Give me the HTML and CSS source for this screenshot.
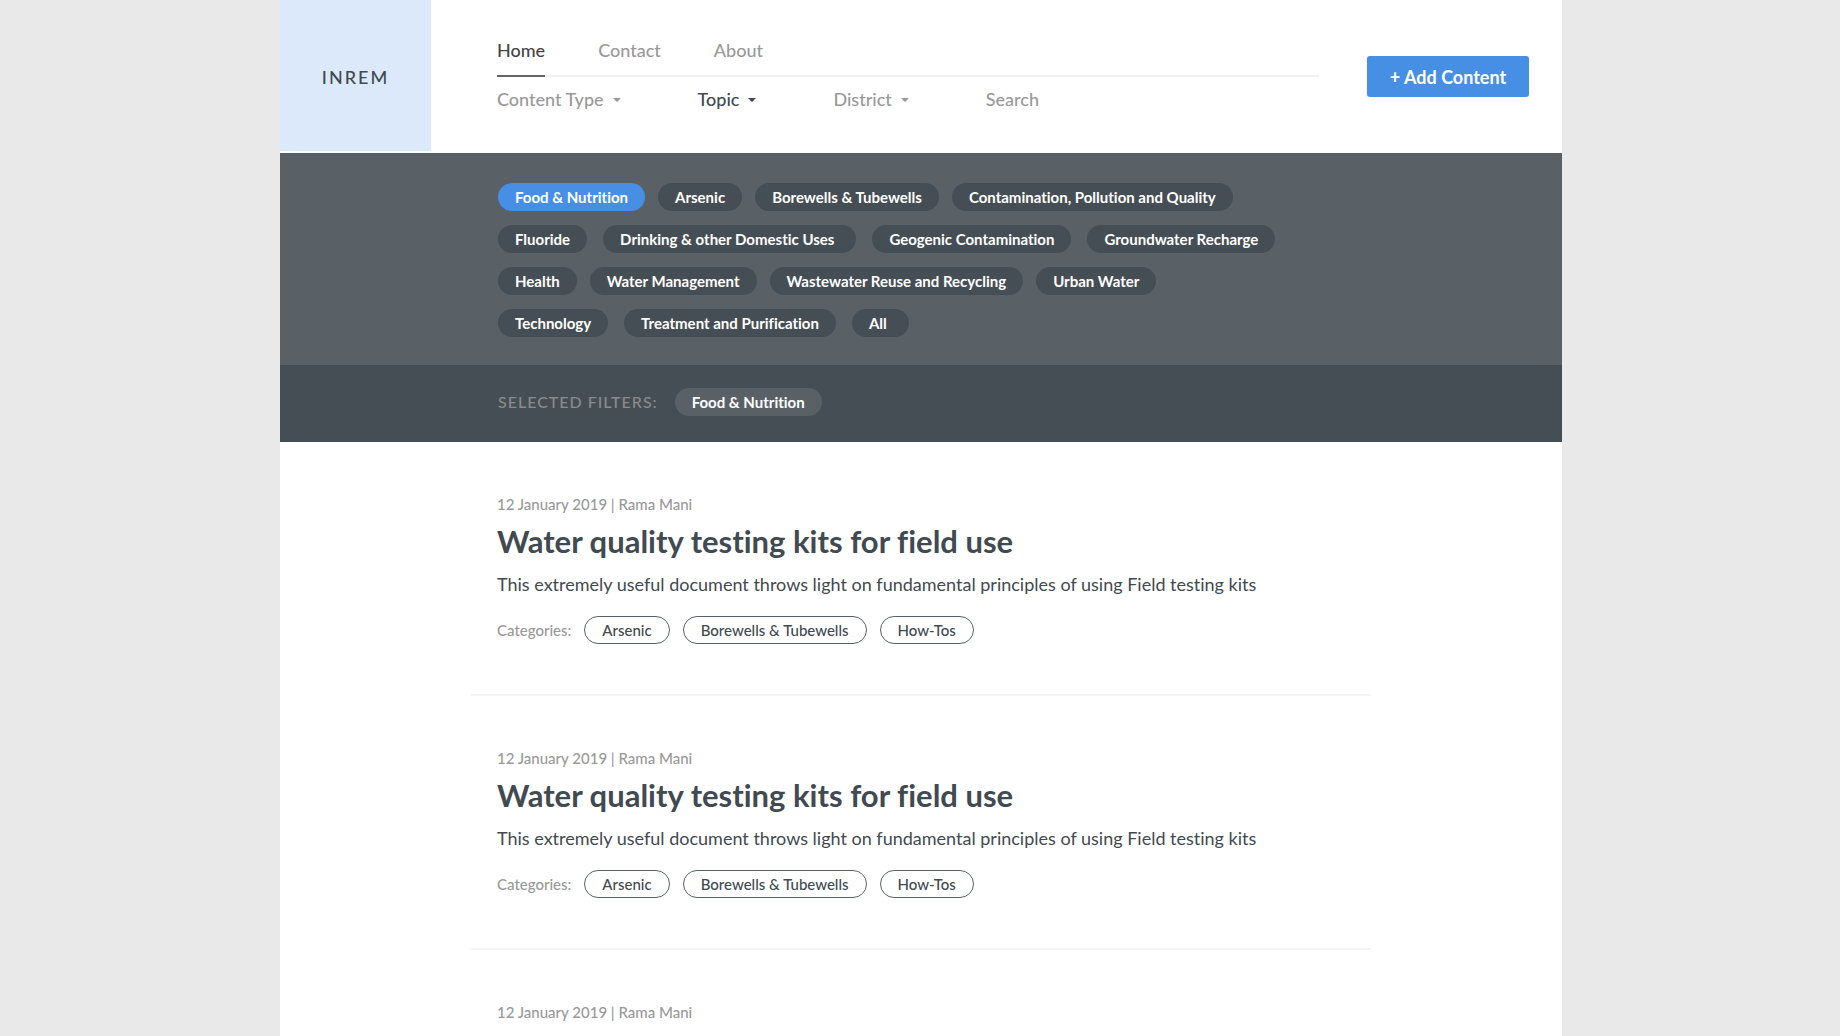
FILE: index.html
```html
<!DOCTYPE html>
<html lang="en">
<head>
  <meta charset="utf-8">
  <meta name="viewport" content="width=device-width, initial-scale=1">
  <title>INREM</title>
  <link rel="stylesheet" href="styles.css">
</head>
<body>
  <div class="page">
    <header class="header">
      <a class="logo" href="#">INREM</a>
      <div class="menus">
        <nav class="nav" aria-label="Main">
          <a class="nav-link is-active" href="#" aria-current="page">Home</a>
          <a class="nav-link" href="#">Contact</a>
          <a class="nav-link" href="#">About</a>
        </nav>
        <div class="filters">
          <button class="filter" type="button" aria-haspopup="true">Content Type <svg class="caret" viewBox="0 0 8 4" aria-hidden="true"><path d="M0 0h8L4.600 3.600q-.6.5-1.200 0z"/></svg></button>
          <button class="filter is-open" type="button" aria-haspopup="true" aria-expanded="true">Topic <svg class="caret" viewBox="0 0 8 4" aria-hidden="true"><path d="M0 0h8L4.600 3.600q-.6.5-1.200 0z"/></svg></button>
          <button class="filter" type="button" aria-haspopup="true">District <svg class="caret" viewBox="0 0 8 4" aria-hidden="true"><path d="M0 0h8L4.600 3.600q-.6.5-1.200 0z"/></svg></button>
          <button class="filter" type="button">Search</button>
        </div>
      </div>
      <button class="add" type="button">+ Add Content</button>
    </header>

    <section class="topics" aria-label="Topics">
      <div class="topic-row">
        <button class="chip is-selected" type="button">Food &amp; Nutrition</button>
        <button class="chip" type="button">Arsenic</button>
        <button class="chip" type="button">Borewells &amp; Tubewells</button>
        <button class="chip" type="button">Contamination, Pollution and Quality</button>
      </div>
      <div class="topic-row topic-row-wide">
        <button class="chip" type="button">Fluoride</button>
        <button class="chip chip-roomy" type="button">Drinking &amp; other Domestic Uses</button>
        <button class="chip" type="button">Geogenic Contamination</button>
        <button class="chip" type="button">Groundwater Recharge</button>
      </div>
      <div class="topic-row">
        <button class="chip" type="button">Health</button>
        <button class="chip" type="button">Water Management</button>
        <button class="chip" type="button">Wastewater Reuse and Recycling</button>
        <button class="chip" type="button">Urban Water</button>
      </div>
      <div class="topic-row topic-row-wide">
        <button class="chip" type="button">Technology</button>
        <button class="chip" type="button">Treatment and Purification</button>
        <button class="chip chip-roomy" type="button">All</button>
      </div>
    </section>

    <section class="selected">
      <h2 class="selected-label">SELECTED FILTERS:</h2>
      <button class="chip chip-light" type="button">Food &amp; Nutrition</button>
    </section>

    <main class="articles">
      <article class="article">
        <p class="meta">12 January 2019 | Rama Mani</p>
        <h2 class="title">Water quality testing kits for field use</h2>
        <p class="summary">This extremely useful document throws light on fundamental principles of using Field testing kits</p>
        <div class="categories">
          <span class="categories-label">Categories:</span>
          <a class="tag" href="#">Arsenic</a>
          <a class="tag" href="#">Borewells &amp; Tubewells</a>
          <a class="tag" href="#">How-Tos</a>
        </div>
      </article>
      <article class="article">
        <p class="meta">12 January 2019 | Rama Mani</p>
        <h2 class="title">Water quality testing kits for field use</h2>
        <p class="summary">This extremely useful document throws light on fundamental principles of using Field testing kits</p>
        <div class="categories">
          <span class="categories-label">Categories:</span>
          <a class="tag" href="#">Arsenic</a>
          <a class="tag" href="#">Borewells &amp; Tubewells</a>
          <a class="tag" href="#">How-Tos</a>
        </div>
      </article>
      <article class="article article-last">
        <p class="meta">12 January 2019 | Rama Mani</p>
      </article>
    </main>
  </div>
</body>
</html>
```

FILE: styles.css
```css
:root {
  --ink: #414a50;
  --muted: #999;
  --line: #f1f1f1;
  --blue: #468fe4;
  --panel: #596167;
  --panel-dark: #464e55;
  --gutter: 218px;
}

* {
  box-sizing: border-box;
}

body {
  margin: 0;
  padding-left: 2px;
  background: #e9e9e9;
  color: var(--ink);
  font-family: Lato, "Liberation Sans", sans-serif;
  font-size: 18px;
  font-weight: 500;
  font-variant-ligatures: no-common-ligatures;
}

button {
  margin: 0;
  padding: 0;
  border: 0;
  background: none;
  color: inherit;
  font: inherit;
  font-variant-ligatures: inherit;
  white-space: nowrap;
  cursor: pointer;
}

a {
  color: inherit;
  text-decoration: none;
}

h2,
p {
  margin: 0;
}

.page {
  max-width: 1282px;
  min-height: 100vh;
  margin: 0 auto;
  background: #fff;
}

/* Header */
.header {
  display: flex;
  align-items: flex-start;
  padding-bottom: 2px;
}

.logo {
  display: flex;
  flex: none;
  align-items: center;
  justify-content: center;
  width: 151px;
  height: 151px;
  padding-top: 2px;
  background: #dbe9fa;
  letter-spacing: 2px;
}

.menus {
  flex: 1;
  margin: 38px 48px 0 66px;
}

.nav {
  display: flex;
  gap: 53px;
  border-bottom: 2px solid var(--line);
  color: var(--muted);
}

.nav-link {
  margin-bottom: -2px;
  padding-bottom: 13px;
  border-bottom: 2px solid transparent;
  line-height: 24px;
}

.nav-link.is-active {
  border-color: #666;
  color: #444;
}

.filters {
  display: flex;
  gap: 77px;
  padding-top: 10px;
  color: var(--muted);
}

.filter {
  display: flex;
  align-items: center;
  gap: 9px;
  line-height: 24px;
}

.filter.is-open {
  color: var(--ink);
}

.caret {
  width: 8px;
  height: 4px;
  margin-top: 2px;
  fill: currentColor;
}

.add {
  flex: none;
  width: 162px;
  height: 41px;
  margin: 56px 33px 0 0;
  border-radius: 3px;
  background: var(--blue);
  color: #fff;
  font-weight: 700;
}

/* Topic picker */
.topics {
  display: grid;
  gap: 14px;
  padding: 30px 32px 28px var(--gutter);
  background: var(--panel);
}

.topic-row {
  display: flex;
  flex-wrap: wrap;
  gap: 13px;
}

.topic-row-wide {
  gap: 16px;
}

.chip {
  height: 28px;
  padding: 0 17px;
  border-radius: 14px;
  background: var(--panel-dark);
  color: #fff;
  font-size: 15px;
  font-weight: 700;
}

.chip-roomy {
  padding-right: 22px;
}

.chip.is-selected {
  background: var(--blue);
}

.chip-light {
  background: var(--panel);
}

.selected {
  display: flex;
  align-items: center;
  gap: 17px;
  padding: 23px 32px 26px var(--gutter);
  background: var(--panel-dark);
}

.selected-label {
  color: #8b8b8b;
  font-size: 16px;
  font-weight: 500;
  line-height: 24px;
  letter-spacing: 1px;
}

/* Article list */
.articles {
  padding: 0 191px;
}

.article {
  padding: 50px 26px 50px;
  border-bottom: 2px solid #f4f4f4;
}

.article-last {
  padding-bottom: 0;
  border-bottom: 0;
}

.meta {
  color: var(--muted);
  font-size: 15px;
  line-height: 24px;
}

.title {
  font-size: 31px;
  font-weight: 700;
  line-height: 50px;
}

.summary {
  font-weight: 400;
  line-height: 36px;
}

.categories {
  display: flex;
  align-items: center;
  gap: 13px;
  padding-top: 14px;
}

.categories-label {
  color: var(--muted);
  font-size: 15px;
}

.tag {
  padding: 0 17px;
  border: 1px solid #596167;
  border-radius: 14px;
  font-size: 15px;
  line-height: 26px;
}
```
